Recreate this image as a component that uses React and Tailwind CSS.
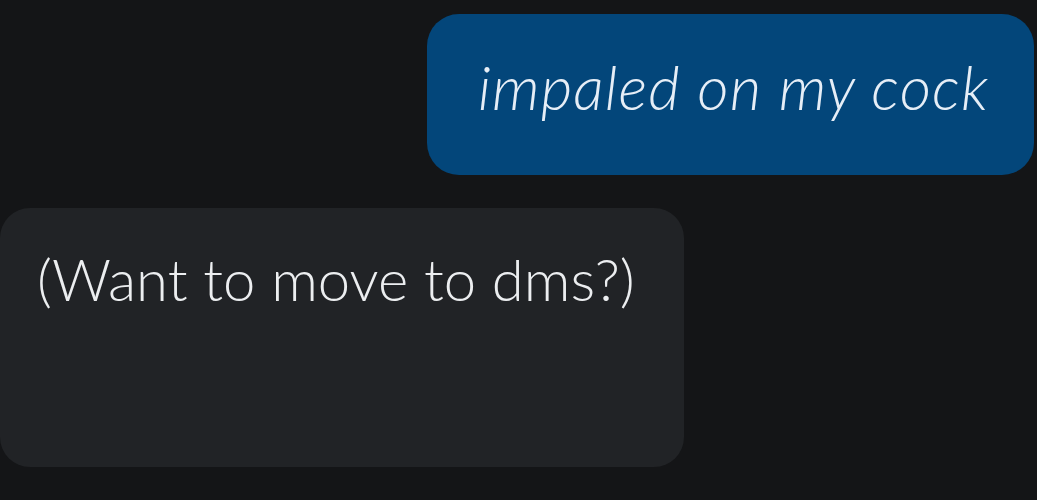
import React from "react";

const FONT = { fontFamily: "Lato, 'Open Sans', sans-serif" };

export default function App() {
  return (
    <div className="w-[1037px] h-[500px] bg-[#141517] overflow-hidden flex flex-col" style={FONT}>
      {/* outgoing */}
      <div className="self-end mt-[14px] mr-[3px] w-[607px] h-[161px] rounded-[32px] bg-[#03467a] flex items-center pl-[51px]">
        <span className="text-[#e6eef7] text-[61px] italic font-light leading-none tracking-[1.1px] -mt-[16px]">impaled on my cock</span>
      </div>
      {/* incoming */}
      <div className="mt-[33px] w-[684px] h-[259px] rounded-[30px] bg-[#212326] pl-[37px] pt-[42px]">
        <span className="text-[#eceef0] text-[58px] font-light leading-none">(Want to move to dms?)</span>
      </div>
    </div>
  );
}
